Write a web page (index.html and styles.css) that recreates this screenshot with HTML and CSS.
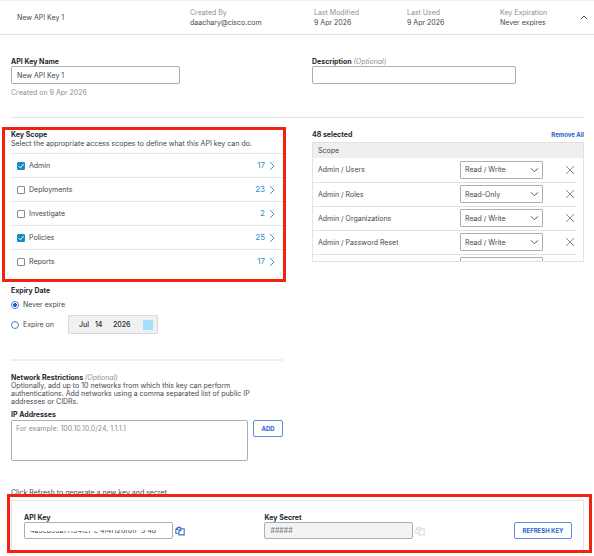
FILE: index.html
```html
<!DOCTYPE html>
<html lang="en">
<head>
<meta charset="utf-8">
<meta name="viewport" content="width=device-width, initial-scale=1">
<title>API Keys</title>
<link rel="stylesheet" href="styles.css">
</head>
<body>
<svg class="sprite" aria-hidden="true">
  <symbol id="chevron-right" viewBox="0 0 6 10"><path d="M1 1l4 4-4 4"/></symbol>
  <symbol id="chevron-down" viewBox="0 0 10 6"><path d="M1 1l4 4 4-4"/></symbol>
  <symbol id="chevron-up" viewBox="0 0 8 5"><path d="M1 4l3-3 3 3"/></symbol>
  <symbol id="close" viewBox="0 0 10 10"><path d="M1 1l8 8M9 1L1 9"/></symbol>
  <symbol id="tick" viewBox="0 0 8 8"><path d="M1.5 4l1.8 1.8L6.7 2"/></symbol>
  <symbol id="copy" viewBox="0 0 18 18"><path d="M7 13H1.500V6L5 2.500H10V5M5 2.500V6H1.500M7 8.500L10.500 5H16.500V16H7zM10.500 5V8.500H7"/></symbol>
</svg>

<header class="summary">
  <h1 class="summary-name">New API Key 1</h1>
  <dl class="meta"><dt>Created By</dt><dd>daachary@cisco.com</dd></dl>
  <dl class="meta"><dt>Last Modified</dt><dd>9 Apr 2026</dd></dl>
  <dl class="meta"><dt>Last Used</dt><dd>9 Apr 2026</dd></dl>
  <dl class="meta"><dt>Key Expiration</dt><dd>Never expires</dd></dl>
  <button class="icon-button" type="button" aria-label="Collapse"><svg class="icon icon-up"><use href="#chevron-up"/></svg></button>
</header>

<main class="content">
  <section class="columns details">
    <div class="field">
      <label class="label" for="name">API Key Name</label>
      <input class="input name-input" id="name" type="text" value="New API Key 1">
      <p class="hint">Created on 9 Apr 2026</p>
    </div>
    <div class="field">
      <label class="label" for="description">Description <em class="optional">(Optional)</em></label>
      <input class="input description-input" id="description" type="text">
    </div>
  </section>

  <div class="columns access">
    <div>
      <section class="scopes">
        <h2 class="label">Key Scope</h2>
        <p>Select the appropriate access scopes to define what this API key can do.</p>
        <ul class="scope-list">
          <li class="scope"><label class="option"><span class="check"><input type="checkbox" checked><svg class="icon"><use href="#tick"/></svg></span>Admin</label><a class="count" href="#admin">17 <svg class="icon icon-right"><use href="#chevron-right"/></svg></a></li>
          <li class="scope"><label class="option"><span class="check"><input type="checkbox"></span>Deployments</label><a class="count" href="#deployments">23 <svg class="icon icon-right"><use href="#chevron-right"/></svg></a></li>
          <li class="scope"><label class="option"><span class="check"><input type="checkbox"></span>Investigate</label><a class="count" href="#investigate">2 <svg class="icon icon-right"><use href="#chevron-right"/></svg></a></li>
          <li class="scope"><label class="option"><span class="check"><input type="checkbox" checked><svg class="icon"><use href="#tick"/></svg></span>Policies</label><a class="count" href="#policies">25 <svg class="icon icon-right"><use href="#chevron-right"/></svg></a></li>
          <li class="scope"><label class="option"><span class="check"><input type="checkbox"></span>Reports</label><a class="count" href="#reports">17 <svg class="icon icon-right"><use href="#chevron-right"/></svg></a></li>
        </ul>
        <div class="frame scopes-frame"></div>
      </section>

      <section class="expiry">
        <h2 class="label">Expiry Date</h2>
        <label class="radio never"><input type="radio" name="expiry" checked>Never expire</label>
        <div class="expire-on">
          <label class="radio"><input type="radio" name="expiry">Expire on</label>
          <div class="date">
            <input class="date-part month" type="text" value="Jul" aria-label="Month">
            <input class="date-part day" type="text" value="14" aria-label="Day">
            <input class="date-part year" type="text" value="2026" aria-label="Year">
            <button class="calendar" type="button" aria-label="Open calendar"></button>
          </div>
        </div>
      </section>

      <section class="network">
        <h2 class="label">Network Restrictions <em class="optional">(Optional)</em></h2>
        <p class="network-text">Optionally, add up to 10 networks from which this key can perform authentications. Add networks using a comma separated list of public IP addresses or CIDRs.</p>
        <label class="label" for="addresses">IP Addresses</label>
        <div class="address-row">
          <textarea class="input addresses" id="addresses" placeholder="For example: 100.10.10.0/24, 1.1.1.1"></textarea>
          <button class="button add" type="button">ADD</button>
        </div>
      </section>
    </div>

    <section>
      <div class="selected-head"><h2 class="label">48 selected</h2><a class="remove-all" href="#remove">Remove All</a></div>
      <div class="selected-box">
        <table class="selected">
          <thead><tr><th colspan="4" scope="col">Scope</th></tr></thead>
          <tbody>
            <tr><td>Admin / Users</td><td class="access-cell"><span class="select"><select aria-label="Access for Users"><option>Read / Write</option><option>Read-Only</option></select><svg class="icon"><use href="#chevron-down"/></svg></span></td><td class="remove-cell"><button class="icon-button" type="button" aria-label="Remove Users"><svg class="icon icon-close"><use href="#close"/></svg></button></td><td class="gutter"></td></tr>
            <tr><td>Admin / Roles</td><td class="access-cell"><span class="select"><select aria-label="Access for Roles"><option>Read-Only</option><option>Read / Write</option></select><svg class="icon"><use href="#chevron-down"/></svg></span></td><td class="remove-cell"><button class="icon-button" type="button" aria-label="Remove Roles"><svg class="icon icon-close"><use href="#close"/></svg></button></td><td class="gutter"></td></tr>
            <tr><td>Admin / Organizations</td><td class="access-cell"><span class="select"><select aria-label="Access for Organizations"><option>Read / Write</option><option>Read-Only</option></select><svg class="icon"><use href="#chevron-down"/></svg></span></td><td class="remove-cell"><button class="icon-button" type="button" aria-label="Remove Organizations"><svg class="icon icon-close"><use href="#close"/></svg></button></td><td class="gutter"></td></tr>
            <tr><td>Admin / Password Reset</td><td class="access-cell"><span class="select"><select aria-label="Access for Password Reset"><option>Read / Write</option><option>Read-Only</option></select><svg class="icon"><use href="#chevron-down"/></svg></span></td><td class="remove-cell"><button class="icon-button" type="button" aria-label="Remove Password Reset"><svg class="icon icon-close"><use href="#close"/></svg></button></td><td class="gutter"></td></tr>
            <tr><td></td><td class="access-cell"><span class="select"><select aria-label="Access"><option></option></select></span></td><td></td><td class="gutter"></td></tr>
          </tbody>
        </table>
      </div>
    </section>
  </div>

  <section class="refresh">
    <p class="refresh-text">Click Refresh to generate a new key and secret.</p>
    <div class="key-box">
      <div class="key-field">
        <label class="label" for="key">API Key</label>
        <div class="key-row">
          <div class="masked">
            <input class="input" id="key" type="text" value="4a5cb95a7f154fc7 c 4f4f126f8ff  3 4d" readonly>
            <span class="mask"></span><span class="mask mask-end"></span>
          </div>
          <button class="icon-button copy" type="button" aria-label="Copy API key"><svg class="icon"><use href="#copy"/></svg></button>
        </div>
      </div>
      <div class="key-field">
        <label class="label" for="secret">Key Secret</label>
        <div class="key-row">
          <div class="masked"><input class="input" id="secret" type="text" value="#####" disabled></div>
          <button class="icon-button copy" type="button" aria-label="Copy secret" disabled><svg class="icon"><use href="#copy"/></svg></button>
        </div>
      </div>
      <button class="button refresh-button" type="button">REFRESH KEY</button>
    </div>
    <div class="frame key-frame"></div>
  </section>
</main>
</body>
</html>
```

FILE: styles.css
```css
* { box-sizing: border-box; }
body {
  margin: 0;
  background: #fff;
  color: #43474d;
  font: 7px/9px Inter, "Liberation Sans", sans-serif;
}
h1, h2, p, dl, dd, ul { margin: 0; padding: 0; font: inherit; }
p { line-height: 9px; }
ul { list-style: none; }
input, select, textarea, button { font: inherit; color: inherit; margin: 0; }
a { text-decoration: none; }
.sprite { position: absolute; width: 0; height: 0; }
.icon { display: block; fill: none; stroke: currentColor; stroke-width: 1; }
.icon-up { width: 8px; height: 5px; }
.icon-right { width: 6px; height: 10px; }
.icon-close { width: 10px; height: 10px; }
.icon-button { display: block; padding: 0; border: 0; background: none; }

.summary {
  display: grid;
  grid-template-columns: 173fr 124fr 93fr 93fr 80fr 8px;
  align-items: center;
  height: 35px;
  padding: 0 6px 0 17px;
  border-top: 1px solid #f2f2f2;
  border-bottom: 1px solid #e0e1e3;
}
.meta { line-height: 10px; }
.meta dt { color: #8b8f96; }

.content { padding: 0 10px 0 11px; }
.columns { display: grid; grid-template-columns: 1fr 1fr; column-gap: 29px; }
.details { padding: 22px 0 20px; border-bottom: 1px solid #e3e4e8; }
.access { padding-top: 12px; }

.label { display: block; font-weight: 700; line-height: 9px; color: #25292f; }
.optional { font-weight: 400; color: #8b8f96; }
.input {
  display: block;
  width: 100%;
  height: 18px;
  padding: 0 5px;
  border: 1px solid #a9b0b3;
  border-radius: 2px;
  background: #fff;
}
.name-input { width: 62%; }
.description-input { width: 75%; }
.hint { margin-top: 4px; color: #8b8f96; }

.frame { position: absolute; border: 3px solid #ee2410; pointer-events: none; }
.scopes, .refresh { position: relative; }
.scopes-frame { inset: -3px -3px -9px -9px; }
.key-frame { inset: 33px -8px 2px -4px; }

.scope-list { margin-top: 5px; }
.scope {
  display: flex;
  align-items: center;
  justify-content: space-between;
  height: 24px;
  padding: 0 8px 0 6px;
  border-top: 1px solid #e4e5e8;
}
.option { display: flex; align-items: center; gap: 4px; }
.check { position: relative; display: block; width: 8px; height: 8px; }
.check input {
  display: block;
  appearance: none;
  width: 8px;
  height: 8px;
  border: 1px solid #858b91;
  border-radius: 1px;
}
.check input:checked { background: #168bc2; border-color: #168bc2; }
.check .icon { position: absolute; inset: 0; width: 8px; height: 8px; color: #fff; }
.count { display: flex; align-items: center; gap: 4px; font-size: 8px; color: #2496c8; }
.count .icon { color: #5f8ddb; }

.expiry { padding: 13px 0 25px; border-bottom: 2px solid #eeeff0; }
.radio { display: flex; align-items: center; gap: 4px; }
.radio input {
  appearance: none;
  width: 8px;
  height: 8px;
  border: 1px solid #4780d0;
  border-radius: 50%;
}
.radio input:checked { background: radial-gradient(circle, #1963c5 0 2px, #fff 2px); }
.never { margin: 5px 0 6px; }
.expire-on { display: flex; gap: 14px; }
.date {
  display: flex;
  align-items: center;
  width: 90px;
  height: 19px;
  padding: 0 4px 0 10px;
  border: 1px solid #d5d7d9;
  border-radius: 1px;
  background: #f1f1f2;
}
.date-part { padding: 0; border: 0; background: none; color: #25292f; font-weight: 500; }
.month { width: 16px; }
.day { width: 18px; }
.year { width: 20px; }
.calendar { width: 10px; height: 10px; margin-left: auto; padding: 0; border: 0; background: #a5def8; }

.network { padding-top: 12px; }
.network-text { margin-bottom: 4px; line-height: 8px; }
.address-row { display: flex; align-items: flex-start; gap: 5px; margin-top: 1px; }
.addresses { flex: 1; height: 41px; padding: 3px 4px; resize: none; }
.addresses::placeholder { color: #8b8f96; }
.button {
  height: 17px;
  padding: 0;
  border: 1px solid #608ddb;
  border-radius: 2px;
  background: #fff;
  color: #2864cb;
  font-size: 6px;
  font-weight: 700;
}
.add { width: 30px; }

.selected-head { display: flex; justify-content: space-between; margin-bottom: 3px; }
.remove-all { color: #2864cb; font-size: 6px; font-weight: 700; }
.selected-box { height: 120px; overflow: hidden; border: 1px solid #e0e2e5; }
.selected { width: 100%; border-collapse: collapse; }
.selected th { height: 15px; padding: 0 5px; background: #efeff0; font-weight: 400; text-align: left; }
.selected td { height: 24px; padding: 0; border-bottom: 1px solid #e0e2e5; }
.selected td:first-child { padding-left: 5px; }
.access-cell { width: 83px; }
.remove-cell { width: 33px; }
.selected .gutter { width: 7px; border-bottom: 0; }
.remove-cell .icon-button { margin-left: 22px; color: #8b8f94; }
.select { position: relative; display: block; }
.select select {
  display: block;
  appearance: none;
  width: 100%;
  height: 18px;
  padding: 0 4px;
  border: 1px solid #a9b0b3;
  border-radius: 1px;
  background: #fff;
}
.select .icon { position: absolute; top: 6px; right: 4px; width: 9px; height: 6px; pointer-events: none; }

.refresh-text { padding-top: 27px; }
.key-box {
  display: grid;
  grid-template-columns: 240fr 249fr 58px;
  align-items: end;
  margin-top: 3px;
  padding: 12px 11px 16px 12px;
  border: 1px solid #e3e4e8;
  border-bottom: 0;
}
.key-row { display: flex; align-items: center; gap: 2px; }
.masked { position: relative; width: 149px; }
.masked .input { height: 17px; }
.masked .input:disabled { background: #f2f3f3; color: #777; }
.mask { position: absolute; top: 3px; left: 5px; width: 68px; height: 6px; background: #fff; }
.mask-end { left: 73px; width: 64px; height: 5px; }
.copy { color: #3974cf; }
.copy .icon { width: 10px; height: 10px; stroke-width: 2; }
.copy:disabled { color: #dcdee0; }
```
